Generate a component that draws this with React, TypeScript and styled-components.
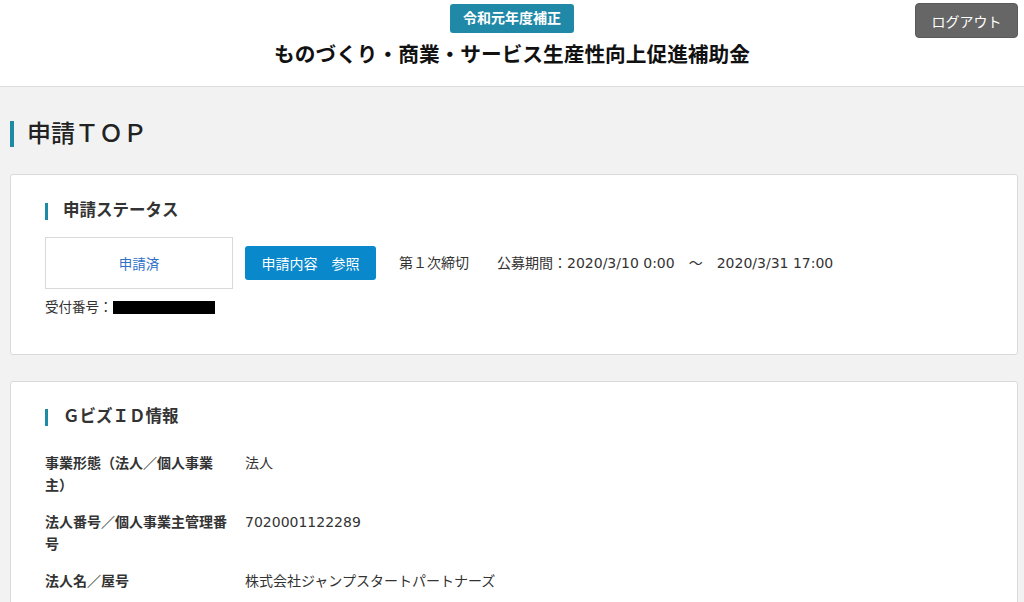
import React from "react";
import styled, { createGlobalStyle } from "styled-components";

const Global = createGlobalStyle`
  html, body { margin: 0; padding: 0; background: #f2f2f2; }
  body {
    font-family: "DejaVu Sans", "Noto Sans CJK JP", sans-serif;
    color: #333;
    -webkit-font-smoothing: antialiased;
    text-spacing-trim: space-all;
  }
  * { box-sizing: border-box; }
`;

const Header = styled.header`
  height: 87px;
  background: #fff;
  border-bottom: 1px solid #dcdcdc;
  display: grid;
  grid-template-columns: 1fr auto 1fr;
`;

const HeaderCenter = styled.div`
  grid-column: 2;
  display: flex;
  flex-direction: column;
  align-items: center;
  padding-top: 4px;
`;

const Badge = styled.div`
  background: #2089a8;
  color: #fff;
  font-size: 14px;
  font-weight: bold;
  height: 29px;
  line-height: 29px;
  padding: 0 13px;
  border-radius: 3px;
`;

const SiteTitle = styled.h1`
  margin: 9px 0 0;
  font-size: 20.7px;
  line-height: 26px;
  font-weight: bold;
  color: #111;
`;

const HeaderRight = styled.div`
  grid-column: 3;
  display: flex;
  justify-content: flex-end;
  align-items: flex-start;
  padding: 3px 6px 0 0;
`;

const LogoutButton = styled.button`
  width: 103px;
  height: 35px;
  background: #666;
  color: #fff;
  border: 1px solid #5a5a5a;
  border-radius: 4px;
  font-family: inherit;
  font-size: 14px;
  cursor: pointer;
`;

const Main = styled.main`
  padding: 34px 6px 0 10px;
  display: flex;
  flex-direction: column;
`;

const PageTitle = styled.h2`
  margin: 0 0 27px;
  display: flex;
  align-items: center;
  gap: 13px;
  font-size: 24px;
  line-height: 26px;
  font-weight: 500;
  color: #222;
  &::before {
    content: "";
    display: block;
    width: 4px;
    height: 26px;
    background: #1e8aa6;
  }
`;

const Card = styled.section<{ $pt: number; $pb: number }>`
  background: #fff;
  border: 1px solid #dadada;
  border-radius: 3px;
  padding: ${(p) => `${p.$pt}px 34px ${p.$pb}px`};
  margin-bottom: 26px;
`;

const SectionTitle = styled.h3`
  margin: 0;
  display: flex;
  align-items: center;
  gap: 15px;
  font-size: 16.5px;
  line-height: 18px;
  font-weight: bold;
  color: #333;
  &::before {
    content: "";
    display: block;
    width: 3px;
    height: 17px;
    background: #1e8aa6;
  }
`;

const StatusRow = styled.div`
  margin-top: 17px;
  display: flex;
  align-items: center;
`;

const StatusBox = styled.div`
  width: 188px;
  height: 52px;
  border: 1px solid #d9d9d9;
  display: flex;
  align-items: center;
  justify-content: center;
  font-size: 13.5px;
  color: #2f6fc8;
`;

const PrimaryButton = styled.button`
  margin-left: 12px;
  width: 131px;
  height: 34px;
  background: #0a88cc;
  color: #fff;
  border: none;
  border-radius: 3px;
  font-family: inherit;
  font-size: 14px;
  white-space: pre;
  cursor: pointer;
`;

const Period = styled.div`
  margin-left: 23px;
  margin-top: -3px;
  font-size: 14px;
  color: #333;
  white-space: pre;
`;

const Receipt = styled.div`
  margin-top: 10px;
  display: flex;
  align-items: center;
  font-size: 13.5px;
  line-height: 16px;
  color: #333;
`;

const Redacted = styled.span`
  display: inline-block;
  width: 102px;
  height: 13px;
  background: #000;
`;

const InfoList = styled.dl`
  margin: 26px 0 0;
  display: flex;
  flex-direction: column;
  gap: 15px;
`;

const InfoRow = styled.div`
  display: grid;
  grid-template-columns: 185px 1fr;
  column-gap: 15px;
  font-size: 14px;
  line-height: 22px;
`;

const Label = styled.dt`
  margin: 0;
  font-weight: bold;
  color: #333;
`;

const Value = styled.dd`
  margin: 0;
  color: #333;
`;

const rows = [
  { label: "事業形態（法人／個人事業主）", value: "法人" },
  { label: "法人番号／個人事業主管理番号", value: "7020001122289" },
  { label: "法人名／屋号", value: "株式会社ジャンプスタートパートナーズ" },
];

export default function App() {
  return (
    <>
      <Global />
      <Header>
        <HeaderCenter>
          <Badge>令和元年度補正</Badge>
          <SiteTitle>ものづくり・商業・サービス生産性向上促進補助金</SiteTitle>
        </HeaderCenter>
        <HeaderRight>
          <LogoutButton>ログアウト</LogoutButton>
        </HeaderRight>
      </Header>
      <Main>
        <PageTitle>申請ＴＯＰ</PageTitle>
        <Card $pt={27} $pb={39}>
          <SectionTitle>申請ステータス</SectionTitle>
          <StatusRow>
            <StatusBox>申請済</StatusBox>
            <PrimaryButton>申請内容　参照</PrimaryButton>
            <Period>{"第１次締切　　公募期間：2020/3/10 0:00　～　2020/3/31 17:00"}</Period>
          </StatusRow>
          <Receipt>
            受付番号：<Redacted />
          </Receipt>
        </Card>
        <Card $pt={26} $pb={20}>
          <SectionTitle>ＧビズＩＤ情報</SectionTitle>
          <InfoList>
            {rows.map((r) => (
              <InfoRow key={r.label}>
                <Label>{r.label}</Label>
                <Value>{r.value}</Value>
              </InfoRow>
            ))}
          </InfoList>
        </Card>
      </Main>
    </>
  );
}
